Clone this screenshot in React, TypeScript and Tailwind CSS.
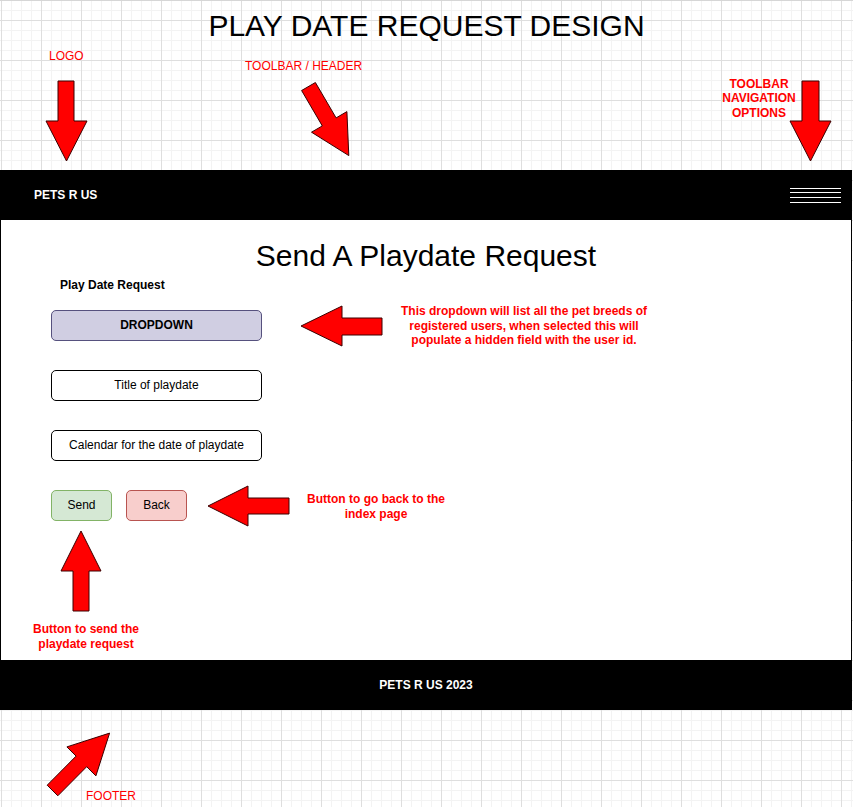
import React from "react";

const font = { fontFamily: '"Liberation Sans", Arial, sans-serif' };

function Annotations() {
  return (
    <svg
      className="absolute left-0 top-0 pointer-events-none"
      width={853}
      height={807}
      viewBox="0 0 853 807"
    >
      <g fill="#ff0000" stroke="#3a0000" strokeWidth={1} strokeLinejoin="miter">
        {/* logo arrow */}
        <polygon points="58,80 74,80 74,120 87,120 66.5,160 46,120 58,120" />
        {/* toolbar nav arrow */}
        <polygon points="802,80 819,80 819,120 831,120 810.5,160 790,120 802,120" />
        {/* toolbar diagonal arrow */}
        <polygon points="315.4,81.5 336.1,116.9 346.9,110.6 348.8,154.6 311.5,131.2 322.3,124.9 301.6,89.5" />
        {/* dropdown arrow */}
        <polygon points="382,317 342,317 342,305 301,325 342,345 342,334 382,334" />
        {/* back arrow */}
        <polygon points="289,497 248,497 248,485 208,505 248,525 248,513 289,513" />
        {/* send arrow */}
        <polygon points="81,530 101,570 89,570 89,610 73,610 73,570 61,570" />
        {/* footer arrow */}
        <polygon points="57.8,794.8 86.7,765.7 95.9,774.9 109.6,732.1 66.9,745.9 76.1,755.1 47.2,784.2" />
      </g>
    </svg>
  );
}

function Hamburger() {
  return (
    <svg width={51} height={18} viewBox="0 0 51 18" className="block">
      <g stroke="#ffffff" strokeWidth={1}>
        <line x1={0} y1={2.5} x2={51} y2={2.5} />
        <line x1={0} y1={6.5} x2={51} y2={6.5} />
        <line x1={0} y1={11.5} x2={51} y2={11.5} />
        <line x1={0} y1={16.5} x2={51} y2={16.5} />
      </g>
    </svg>
  );
}

export default function App() {
  return (
    <div
      style={font}
      className="relative w-[853px] h-[807px] overflow-hidden border-t border-[#d6d6d6] bg-white [background-image:linear-gradient(to_right,#dedede_1px,transparent_1px),linear-gradient(to_bottom,#dedede_1px,transparent_1px),linear-gradient(to_right,#f3f3f3_1px,transparent_1px),linear-gradient(to_bottom,#f3f3f3_1px,transparent_1px)] [background-size:40px_40px,40px_40px,10px_10px,10px_10px] [background-position:1px_19px]"
    >
      {/* page title */}
      <div className="pt-[8px] h-[42px] text-center text-[30px] leading-[34px] text-black">
        PLAY DATE REQUEST DESIGN
      </div>

      {/* mockup */}
      <div className="mt-[127px] w-[852px]">
        <header className="h-[50px] bg-black flex items-center justify-between pl-[34px] pr-[11px]">
          <span className="text-white text-[12px] font-bold leading-[14px]">PETS R US</span>
          <Hamburger />
        </header>

        <main className="h-[440px] bg-white border-x border-black flex flex-col">
          <h1 className="pt-[19px] text-center text-[30px] leading-[34px] text-black">
            Send A Playdate Request
          </h1>
          <div className="mt-[5px] ml-[59px] text-[12px] font-bold leading-[14px] text-black">
            Play Date Request
          </div>
          <div className="mt-[18px] ml-[50px] w-[211px] h-[31px] pb-[1px] rounded-[5px] bg-[#d0cee2] border border-[#56517e] flex items-center justify-center text-[12px] font-bold text-black">
            DROPDOWN
          </div>
          <div className="mt-[29px] ml-[50px] w-[211px] h-[31px] pb-[1px] rounded-[5px] bg-white border border-black flex items-center justify-center text-[12px] text-black">
            Title of playdate
          </div>
          <div className="mt-[29px] ml-[50px] w-[211px] h-[31px] pb-[1px] rounded-[5px] bg-white border border-black flex items-center justify-center text-[12px] text-black">
            Calendar for the date of playdate
          </div>
          <div className="mt-[29px] ml-[50px] flex gap-[14px]">
            <div className="w-[61px] h-[31px] pb-[1px] rounded-[5px] bg-[#d5e8d4] border border-[#82b366] flex items-center justify-center text-[12px] text-black">
              Send
            </div>
            <div className="w-[61px] h-[31px] pb-[1px] rounded-[5px] bg-[#f8cecc] border border-[#b85450] flex items-center justify-center text-[12px] text-black">
              Back
            </div>
          </div>
        </main>

        <footer className="h-[50px] bg-black flex items-center justify-center">
          <span className="text-white text-[12px] font-bold leading-[14px]">PETS R US 2023</span>
        </footer>
      </div>

      <Annotations />

      {/* annotation labels on the canvas */}
      <div className="absolute left-[49px] top-[48px] text-[12px] leading-[14px] text-[#ff0000]">LOGO</div>
      <div className="absolute left-[245px] top-[58px] text-[12px] leading-[14px] text-[#ff0000]">
        TOOLBAR / HEADER
      </div>
      <div className="absolute left-[709px] top-[76px] w-[100px] text-center text-[12px] font-bold leading-[14.4px] text-[#ff0000]">
        TOOLBAR
        <br />
        NAVIGATION
        <br />
        OPTIONS
      </div>
      <div className="absolute left-[384px] top-[303px] w-[280px] text-center text-[12px] font-bold leading-[14.6px] text-[#ff0000]">
        This dropdown will list all the pet breeds of
        <br />
        registered users, when selected this will
        <br />
        populate a hidden field with the user id.
      </div>
      <div className="absolute left-[296px] top-[491px] w-[160px] text-center text-[12px] font-bold leading-[15px] text-[#ff0000]">
        Button to go back to the
        <br />
        index page
      </div>
      <div className="absolute left-[6px] top-[621px] w-[160px] text-center text-[12px] font-bold leading-[15px] text-[#ff0000]">
        Button to send the
        <br />
        playdate request
      </div>
      <div className="absolute left-[86px] top-[788px] text-[12px] leading-[14px] text-[#ff0000]">FOOTER</div>
    </div>
  );
}
